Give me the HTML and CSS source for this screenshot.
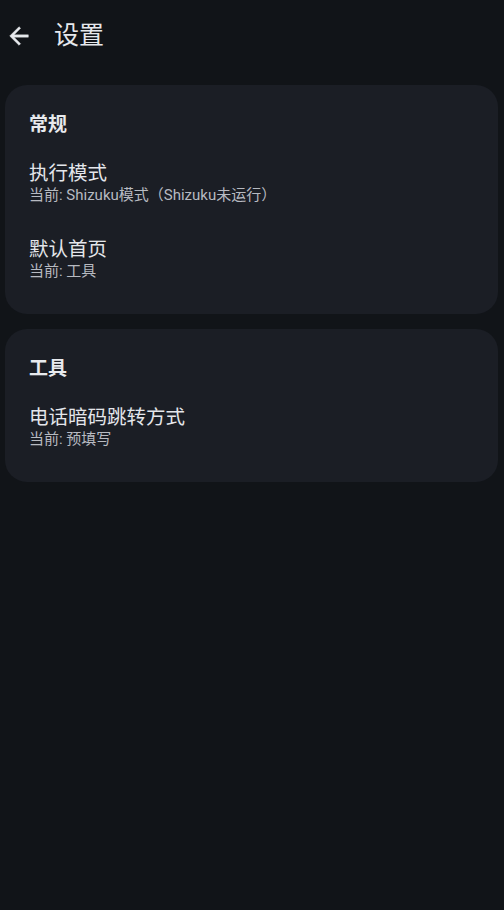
FILE: index.html
```html
<!DOCTYPE html>
<html lang="zh-CN">
<head>
<meta charset="utf-8">
<title>设置</title>
<link rel="stylesheet" href="styles.css">
</head>
<body>
<div class="app">
  <header class="topbar">
    <button class="back" aria-label="返回">
      <svg width="28" height="28" viewBox="0 0 24 24"><path d="M20 11H7.83l5.59-5.59L12 4l-8 8 8 8 1.41-1.41L7.83 13H20v-2z" fill="#e6e8ec" stroke="#e6e8ec" stroke-width="0.35"/></svg>
    </button>
    <h1 class="title">设置</h1>
  </header>
  <main class="content">
    <section class="card">
      <h2 class="section-title">常规</h2>
      <div class="item">
        <div class="item-title">执行模式</div>
        <div class="item-sub">当前: Shizuku模式（Shizuku未运行）</div>
      </div>
      <div class="item">
        <div class="item-title">默认首页</div>
        <div class="item-sub">当前: 工具</div>
      </div>
    </section>
    <section class="card">
      <h2 class="section-title">工具</h2>
      <div class="item">
        <div class="item-title">电话暗码跳转方式</div>
        <div class="item-sub">当前: 预填写</div>
      </div>
    </section>
  </main>
</div>
</body>
</html>
```
FILE: styles.css
```css
* { box-sizing: border-box; }
html, body {
  margin: 0;
  padding: 0;
  background: #111418;
  font-family: Roboto, "Noto Sans CJK SC", "Noto Sans", sans-serif;
  color: #e3e5ea;
}
.app {
  width: 504px;
  min-height: 910px;
  background: #111418;
}
.topbar {
  height: 72px;
  display: flex;
  align-items: center;
  padding-left: 5px;
}
.back {
  width: 28px;
  height: 28px;
  padding: 0;
  border: 0;
  background: none;
  display: flex;
  align-items: center;
  justify-content: center;
}
.title {
  margin: 0 0 0 21px;
  font-size: 25px;
  font-weight: 400;
  line-height: 32px;
  color: #e6e8ec;
}
.content {
  padding: 13px 6px 0 5px;
  display: flex;
  flex-direction: column;
  gap: 15px;
}
.card {
  background: #1b1e25;
  border-radius: 22px;
  padding: 27px 24px 19px 24px;
}
.section-title {
  margin: 0 0 5px 0;
  font-size: 19px;
  font-weight: 700;
  line-height: 26px;
  color: #e8eaee;
}
.item {
  padding: 18px 0 15px 0;
}
.item-title {
  font-size: 19.5px;
  line-height: 25px;
  color: #e4e6eb;
}
.item-sub {
  font-size: 15px;
  line-height: 18px;
  color: #b7bac1;
}
```
